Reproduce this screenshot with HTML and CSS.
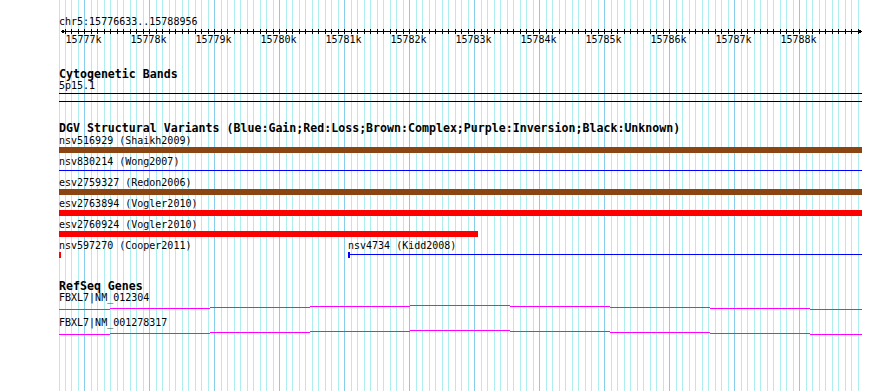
FILE: index.html
```html
<!DOCTYPE html>
<html lang="en">

<head>
    <meta charset="UTF-8">
    <meta name="viewport" content="width=device-width, initial-scale=1.0">
    <title>chr5:15776633..15788956</title>
    <link rel="stylesheet" href="styles.css">
</head>

<body>
    <div class="browser">
        <svg class="grid" width="890" height="391" shape-rendering="crispEdges"></svg>
        <div class="tracks">
            <!-- 标尺 -->
            <div class="ruler">
                <div class="label">chr5:15776633..15788956</div>
                <svg class="scale" width="803" height="7" shape-rendering="crispEdges">
                    <rect x="2" y="3" width="800" height="1"></rect>
                    <path d="M5.5 1.5L2.5 3.5L5.5 5.5M799.5 1.5L802.5 3.5L799.5 5.5"></path>
                    <g class="ticks"></g>
                </svg>
                <div class="numbers">
                    <span>15777k</span>
                    <span>15778k</span>
                    <span>15779k</span>
                    <span>15780k</span>
                    <span>15781k</span>
                    <span>15782k</span>
                    <span>15783k</span>
                    <span>15784k</span>
                    <span>15785k</span>
                    <span>15786k</span>
                    <span>15787k</span>
                    <span>15788k</span>
                </div>
            </div>

            <div class="track cyto">
                <div class="title">Cytogenetic Bands</div>
                <div class="label">5p15.1</div>
                <div class="band"></div>
            </div>

            <div class="track dgv">
                <div class="title">DGV Structural Variants (Blue:Gain;Red:Loss;Brown:Complex;Purple:Inversion;Black:Unknown)</div>
                <div class="rows">
                    <div class="row">
                        <div class="feature">
                            <div class="label">nsv516929 (Shaikh2009)</div>
                            <div class="bar complex"></div>
                        </div>
                    </div>
                    <div class="row">
                        <div class="feature">
                            <div class="label">nsv830214 (Wong2007)</div>
                            <div class="bar gain"></div>
                        </div>
                    </div>
                    <div class="row">
                        <div class="feature">
                            <div class="label">esv2759327 (Redon2006)</div>
                            <div class="bar complex"></div>
                        </div>
                    </div>
                    <div class="row">
                        <div class="feature">
                            <div class="label">esv2763894 (Vogler2010)</div>
                            <div class="bar loss"></div>
                        </div>
                    </div>
                    <div class="row">
                        <div class="feature">
                            <div class="label">esv2760924 (Vogler2010)</div>
                            <div class="bar loss" style="width: 419px"></div>
                        </div>
                    </div>
                    <div class="row">
                        <div class="feature" style="flex: none; width: 289px">
                            <div class="label">nsv597270 (Cooper2011)</div>
                            <div class="bar loss" style="width: 2px"></div>
                        </div>
                        <div class="feature">
                            <div class="label">nsv4734 (Kidd2008)</div>
                            <div class="bar gain start"></div>
                        </div>
                    </div>
                </div>
            </div>

            <div class="track refseq">
                <div class="title">RefSeq Genes</div>
                <div class="genes">
                    <div class="gene">
                        <div class="label">FBXL7|NM_012304</div>
                        <svg class="intron" width="803" height="13" shape-rendering="crispEdges">
                            <path d="M0 5.5h51M51 4.5h100M151 3.5h100M251 2.5h100M351 1.5h100M451 2.5h100M551 3.5h100M651 4.5h100M751 5.5h52"></path>
                        </svg>
                    </div>
                    <div class="gene">
                        <div class="label">FBXL7|NM_001278317</div>
                        <svg class="intron" width="803" height="13" shape-rendering="crispEdges">
                            <path d="M0 5.5h51M51 4.5h100M151 3.5h100M251 2.5h100M351 1.5h100M451 2.5h100M551 3.5h100M651 4.5h100M751 5.5h52"></path>
                        </svg>
                    </div>
                </div>
            </div>
        </div>
    </div>
    <script>
        //每100bp一条网格线，每1000bp一条深色线
        var grid = document.querySelector('.grid')
        var ticks = document.querySelector('.ticks')
        var end = 15788956
        var left = 59

        function toX(bp) {
            return Math.round(84.3 + (bp - 15777000) * 0.065)
        }

        var lines = '<rect class="minor" x="59" y="0" width="1" height="391"></rect>'
        var marks = ''
        for (var bp = 15776700; bp <= end; bp += 100) {
            var x = toX(bp)
            var cls = bp % 1000 == 0 ? 'major' : 'minor'
            lines += '<rect class="' + cls + '" x="' + x + '" y="0" width="1" height="391"></rect>'
            marks += '<rect x="' + (x - left) + '" y="1" width="1" height="5"></rect>'
        }
        grid.innerHTML = lines
        ticks.innerHTML = marks
    </script>
</body>

</html>
```

FILE: styles.css
```css
/* 初始化 */
* {
    margin: 0;
    padding: 0;
    box-sizing: border-box;
}

body {
    font-family: "DejaVu Sans Mono", "Liberation Mono", monospace;
    font-size: 10px;
    color: #000;
    background-color: #fff;
}

.browser {
    position: relative;
    width: 890px;
    height: 391px;
    overflow: hidden;
}

.grid {
    position: absolute;
    left: 0;
    top: 0;
}

.grid .minor {
    fill: #aeeeee;
}

.grid .major {
    fill: #87ceeb;
}

.tracks {
    position: relative;
    margin-left: 59px;
    width: 803px;
}

.label {
    line-height: 12px;
    white-space: nowrap;
}

.title {
    font-size: 11.6px;
    font-weight: bold;
    line-height: 12px;
    white-space: nowrap;
}

/* 标尺 */
.ruler {
    padding-top: 16px;
}

.scale {
    display: block;
}

.scale rect {
    fill: #000;
}

.scale path {
    fill: none;
    stroke: #000;
}

.numbers {
    display: flex;
    margin-top: -1px;
    margin-left: -8px;
    line-height: 12px;
}

.numbers span {
    flex: none;
    width: 65px;
    text-align: center;
}

/* 染色体带 */
.cyto {
    margin-top: 22px;
}

.band {
    margin-top: 1px;
    height: 9px;
    border-top: 1px solid #000;
    border-bottom: 1px solid #000;
}

/* DGV */
.dgv {
    margin-top: 20px;
}

.rows {
    margin-top: 1px;
}

.row {
    display: flex;
    height: 21px;
}

.feature {
    flex: 1;
}

.bar {
    height: 6px;
}

.bar.complex {
    background-color: #8b4513;
}

.bar.loss {
    background-color: #f00;
}

.bar.gain {
    background: linear-gradient(#00f, #00f) 0 2px / 100% 1px no-repeat;
}

.bar.start {
    border-left: 2px solid #00f;
}

/* RefSeq */
.refseq {
    margin-top: 20px;
}

.refseq .title {
    line-height: 11px;
}

.gene {
    height: 25px;
}

.intron {
    display: block;
}

.intron path {
    fill: none;
    stroke: #f0f;
}
```
